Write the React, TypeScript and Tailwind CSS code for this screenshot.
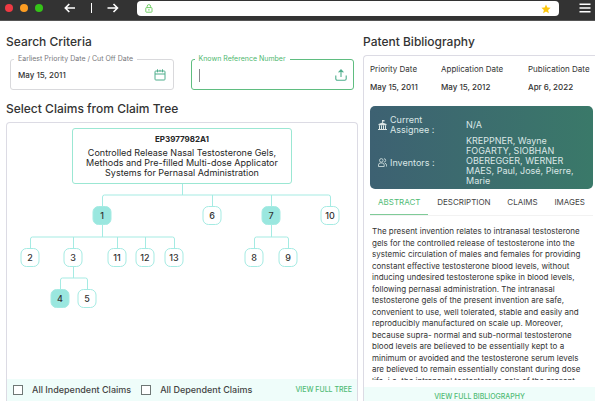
import { useState } from 'react'

type ClaimNode = { id: number; x: number; y: number; independent?: boolean }

const claimNodes: ClaimNode[] = [
  { id: 1, x: 94, y: 83, independent: true },
  { id: 6, x: 204, y: 83 },
  { id: 7, x: 263, y: 83, independent: true },
  { id: 10, x: 322, y: 83 },
  { id: 2, x: 22, y: 125 },
  { id: 3, x: 65, y: 125 },
  { id: 11, x: 109, y: 125 },
  { id: 12, x: 137, y: 125 },
  { id: 13, x: 166, y: 125 },
  { id: 8, x: 246, y: 125 },
  { id: 9, x: 280, y: 125 },
  { id: 4, x: 52, y: 166, independent: true },
  { id: 5, x: 79, y: 166 },
]

const abstractLines = [
  'The present invention relates to intranasal testosterone',
  'gels for the controlled release of testosterone into the',
  'systemic circulation of males and females for providing',
  'constant effective testosterone blood levels, without',
  'inducing undesired testosterone spike in blood levels,',
  'following pernasal administration. The intranasal',
  'testosterone gels of the present invention are safe,',
  'convenient to use, well tolerated, stable and easily and',
  'reproducibly manufactured on scale up. Moreover,',
  'because supra- normal and sub-normal testosterone',
  'blood levels are believed to be essentially kept to a',
  'minimum or avoided and the testosterone serum levels',
  'are believed to remain essentially constant during dose',
  'life, i.e. the intranasal testosterone gels of the present',
]

const dates = [
  { label: 'Priority Date', value: 'May 15, 2011' },
  { label: 'Application Date', value: 'May 15, 2012' },
  { label: 'Publication Date', value: 'Apr 6, 2022' },
]

const tabs = ['ABSTRACT', 'DESCRIPTION', 'CLAIMS', 'IMAGES']

const BrowserBar = () => (
  <header className="flex h-[21px] shrink-0 items-start border-b border-[#555] bg-[#333] pr-1 pl-[5px]">
    <div className="flex h-4 items-center gap-[7px]">
      <span className="size-2 rounded-full bg-[#ee3a43]" />
      <span className="size-2 rounded-full bg-[#fd9d22]" />
      <span className="size-2 rounded-full bg-[#35c318]" />
    </div>
    <nav className="ml-[21px] flex h-4 items-center text-white">
      <button type="button" aria-label="Back">
        <svg className="h-3 w-3" viewBox="0 0 12 12" fill="none" stroke="currentColor" strokeWidth="1.6">
          <path d="M11 6H1.500M5.300 2l-4 4 4 4" />
        </svg>
      </button>
      <span className="mx-[15px] h-[10px] w-px bg-white" />
      <button type="button" aria-label="Forward">
        <svg className="h-3 w-3" viewBox="0 0 12 12" fill="none" stroke="currentColor" strokeWidth="1.6">
          <path d="M.5 6h9.800M6.500 2l4 4-4 4" />
        </svg>
      </button>
    </nav>
    <div className="mt-px ml-[18px] flex h-[15px] flex-1 items-center justify-between rounded bg-white px-2">
      <svg className="h-[9px] w-2" viewBox="0 0 8 9" fill="none" stroke="#67c95a" strokeWidth="0.9">
        <rect x="0.8" y="3.6" width="6.2" height="4.6" rx="0.6" />
        <path d="M2.2 3.6V2.3a1.7 1.7 0 0 1 3.400 0v1.300M3 5.900h1.800" />
      </svg>
      <svg className="h-[10px] w-[10px]" viewBox="0 0 10 10" fill="#fdc60a">
        <path d="M5 .4l1.3 3 3.3.3-2.5 2.2.8 3.3L5 7.5 2.1 9.2l.8-3.3L.4 3.7l3.3-.3z" />
      </svg>
    </div>
    <button type="button" aria-label="Menu" className="ml-5 flex h-4 items-center">
      <svg className="h-[10px] w-3" viewBox="0 0 12 10" stroke="#fff" strokeWidth="1.6">
        <path d="M.5 1.2h11M.5 5h11M.5 8.8h11" />
      </svg>
    </button>
  </header>
)

const SearchCriteria = () => (
  <form className="mt-[6px] grid grid-cols-2 gap-[17px] px-1">
    <fieldset className="min-w-0 rounded-[3px] border border-[#d9d9dc] pl-[3px]">
      <legend className="px-1 text-[7px] leading-[8px] text-[#77777b]">
        <label htmlFor="cutoff">Earliest Priority Date / Cut Off Date</label>
      </legend>
      <div className="flex h-[26px] items-center pr-[7px] pb-[2px] pl-1">
        <input id="cutoff" defaultValue="May 15, 2011" className="w-full min-w-0 text-[8px] font-medium outline-none" />
        <svg className="h-3 w-3 shrink-0" viewBox="0 0 12 12" fill="none" stroke="#4fae8c" strokeWidth="1">
          <rect x="1" y="2" width="10" height="9" rx="0.8" />
          <path d="M1 5h10M3.5 0.3v3M6 0.8v1.7M8.5 0.3v3" />
        </svg>
      </div>
    </fieldset>
    <fieldset className="min-w-0 rounded-[3px] border border-[#5fbd80] pl-[3px]">
      <legend className="px-1 text-[7px] leading-[8px] text-[#4fb86f]">
        <label htmlFor="reference">Known Reference Number</label>
      </legend>
      <div className="flex h-[26px] items-center pr-[6px] pb-[2px] pl-1">
        <span className="h-[13px] w-px shrink-0 bg-[#88888c]" />
        <input id="reference" className="w-full min-w-0 text-[8px] outline-none" />
        <button type="button" aria-label="Upload" className="shrink-0">
          <svg className="h-3 w-3" viewBox="0 0 12 12" fill="none" stroke="#4fae8c" strokeWidth="1.1">
            <path d="M.8 6.5v3.2a1.5 1.5 0 0 0 1.5 1.5h7.4a1.5 1.5 0 0 0 1.5-1.5V6.5M6 8V1M3.6 3.3 6 .9l2.4 2.4" />
          </svg>
        </button>
      </div>
    </fieldset>
  </form>
)

const ClaimTree = () => (
  <section className="mt-[6px] flex min-h-0 flex-1 flex-col rounded-t border border-b-0 border-[#dcdbe4]">
    <div className="relative min-h-0 flex-1">
      <svg className="absolute top-0 left-0 h-48 w-[350px]" viewBox="0 0 350 192" fill="none" stroke="#a5ebe3" strokeWidth="1">
        <path d="M175.500 61v11M95.500 83v-9q0-2 2-2h224q2 0 2 2v9M205.500 72v11M264.500 72v11" />
        <path d="M95.500 102v12M23.500 125v-9q0-2 2-2h140q2 0 2 2v9M66.500 114v11M110.500 114v11M138.500 114v11" />
        <path d="M66.500 144v11M53.500 166v-9q0-2 2-2h23q2 0 2 2v9" />
        <path d="M264.500 102v12M247.500 125v-9q0-2 2-2h30q2 0 2 2v9" />
      </svg>
      <div className="absolute top-[5px] left-[65px] h-14 w-[220px] rounded-[3px] border border-[#9be7d3] bg-white pt-1 text-center whitespace-nowrap text-[#262626]">
        <h3 className="text-[8px] leading-3 font-bold">EP3977982A1</h3>
        <p className="mt-[3px] text-[9px] leading-[10px]">
          Controlled Release Nasal Testosterone Gels,
          <br />
          Methods and Pre-filled Multi-dose Applicator
          <br />
          Systems for Pernasal Administration
        </p>
      </div>
      {claimNodes.map((node) => (
        <button
          key={node.id}
          type="button"
          className={`absolute size-[19px] -translate-x-1/2 rounded-md border border-[#a5ebe3] text-[9px] font-medium text-[#333] ${
            node.independent ? 'bg-[#9ae7df]' : 'bg-white'
          }`}
          style={{ left: node.x + 1, top: node.y }}
        >
          {node.id}
        </button>
      ))}
    </div>
    <footer className="flex h-[22px] shrink-0 items-center bg-[#effdfa] pr-[5px] pl-[6px] text-[9px] font-medium text-[#444]">
      <label className="flex items-center gap-[9px]">
        <input type="checkbox" className="size-[10px] appearance-none border border-[#6f7775] bg-white" />
        All Independent Claims
      </label>
      <label className="ml-[10px] flex items-center gap-[9px]">
        <input type="checkbox" className="size-[10px] appearance-none border border-[#6f7775] bg-white" />
        All Dependent Claims
      </label>
      <button type="button" className="ml-auto text-[7px] font-medium text-[#4fbb75]">
        VIEW FULL TREE
      </button>
    </footer>
  </section>
)

const Bibliography = () => {
  const [active, setActive] = useState('ABSTRACT')

  return (
    <section className="mt-[6px] flex min-h-0 flex-1 flex-col rounded-tl border-t border-l border-[#dcdbe4]">
      <dl className="grid grid-cols-[71fr_87fr_67fr] pt-2 pl-[6px] text-[8px] whitespace-nowrap text-[#333]">
        {dates.map((date) => (
          <div key={date.label}>
            <dt className="leading-[10px]">{date.label}</dt>
            <dd className="mt-2 leading-[10px] font-medium">{date.value}</dd>
          </div>
        ))}
      </dl>
      <div className="mt-[14px] mr-[2px] ml-[6px] grid h-[83px] shrink-0 grid-cols-[88px_1fr] rounded-[5px] bg-linear-to-r from-[#3d6172] to-[#3a7969] pt-[7px] pl-2 text-[9px] leading-[10px] text-[#dbe7e6]">
        <div className="flex items-center gap-[3px]">
          <svg className="h-[10px] w-[9px]" viewBox="0 0 9 10" fill="#dbe7e6">
            <path d="M0 9h9v1H0zM1 5.500h1V9H1zM3 5.500h1V9H3zM5 5.500h1V9H5zM7 5.500h1V9H7zM.5 4 4.500 2.500 8.500 4v1.200H.5zM4 0h2.500v1.500H4.800v1.300H4z" />
          </svg>
          <span>
            Current
            <br />
            Assignee :
          </span>
        </div>
        <div className="flex items-center">N/A</div>
        <div className="flex items-center gap-[3px]">
          <svg className="h-[9px] w-[9px]" viewBox="0 0 9 9" fill="none" stroke="#dbe7e6" strokeWidth="0.8">
            <circle cx="3.300" cy="2.400" r="1.800" />
            <path d="M.5 8.500V7a2 2 0 0 1 2-2h1.700a2 2 0 0 1 2 2v1.500zM6 .7a1.700 1.700 0 0 1 0 3.400M7 5.200a2 2 0 0 1 1.500 1.900v1.400" />
          </svg>
          Inventors :
        </div>
        <div className="whitespace-nowrap">
          KREPPNER, Wayne
          <br />
          FOGARTY, SIOBHAN
          <br />
          OBEREGGER, WERNER
          <br />
          MAES, Paul, José, Pierre,
          <br />
          Marie
        </div>
      </div>
      <div role="tablist" className="mr-[2px] ml-[6px] flex shrink-0 justify-between border-b border-[#f2f2f2] text-[8px] text-[#444]">
        {tabs.map((tab) => (
          <button
            key={tab}
            type="button"
            role="tab"
            aria-selected={tab === active}
            onClick={() => setActive(tab)}
            className={`h-[26px] border-b px-2 ${
              tab === active ? 'border-[#7fcb98] text-[#4fbb75]' : 'border-transparent'
            }`}
          >
            {tab}
          </button>
        ))}
      </div>
      <div className="mt-[10px] min-h-0 flex-1 overflow-hidden pl-2 text-[8px] text-[#333]">
        <p className="flex h-[161px] flex-col justify-between whitespace-nowrap">
          {abstractLines.map((line) => (
            <span key={line} className="leading-[11px]">
              {line}
            </span>
          ))}
        </p>
      </div>
      <footer className="mt-[7px] flex h-[14px] shrink-0 items-end justify-center bg-[#effdfa]">
        <button type="button" className="text-[7px] leading-[8px] font-medium text-[#4fbb75]">
          VIEW FULL BIBLIOGRAPHY
        </button>
      </footer>
    </section>
  )
}

const App = () => (
  <div className="flex h-screen flex-col overflow-hidden bg-white font-['Inter',sans-serif] text-[#333]">
    <BrowserBar />
    <main className="grid min-h-0 flex-1 grid-cols-[88fr_58fr] gap-[5px] pt-[14px] pl-[6px]">
      <div className="flex min-h-0 min-w-0 flex-col">
        <h2 className="text-[12px] leading-[14px] font-medium">Search Criteria</h2>
        <SearchCriteria />
        <h2 className="mt-3 text-[12px] leading-[14px] font-medium">Select Claims from Claim Tree</h2>
        <ClaimTree />
      </div>
      <div className="flex min-h-0 min-w-0 flex-col">
        <h2 className="text-[12px] leading-[14px] font-medium">Patent Bibliography</h2>
        <Bibliography />
      </div>
    </main>
  </div>
)

export default App
